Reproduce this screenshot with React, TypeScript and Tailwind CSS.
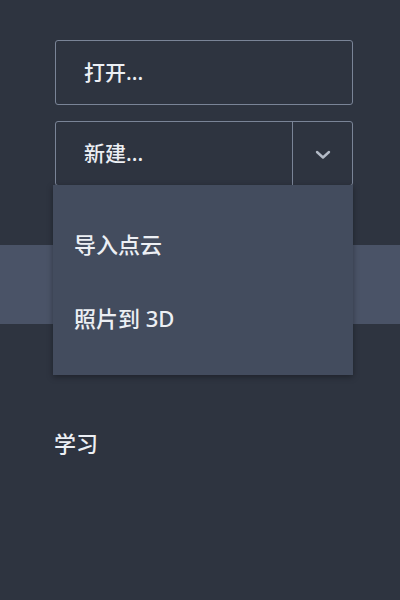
import React from 'react';

const font = { fontFamily: '"Noto Sans", "Noto Sans CJK SC", sans-serif' };

const ChevronDown = () => (
  <svg width="24" height="24" viewBox="0 0 24 24" fill="none" stroke="currentColor" strokeWidth={2.4} strokeLinecap="round" strokeLinejoin="round">
    <path d="M6 10l6 5.5 6-5.5" />
  </svg>
);

export default function App() {
  return (
    <div className="min-h-screen w-full bg-[#2e3440] text-[#eceff4]" style={font}>
      <div className="flex flex-col pt-10 px-[55px] pr-[47px] gap-4">
        <button className="h-[65px] w-full flex items-center rounded-[3px] border border-[#7a8497] px-7 text-[21px] font-medium text-left">
          打开...
        </button>
        <div className="relative">
          <div className="h-[65px] w-full flex rounded-[3px] border border-[#7a8497]">
            <button className="flex-1 flex items-center px-7 text-[21px] font-medium">新建...</button>
            <button className="w-[60px] flex items-center justify-center border-l border-[#7a8497] text-[#b3bac6]">
              <ChevronDown />
            </button>
          </div>
          <div className="absolute left-[-2px] right-0 top-[64px] z-10 h-[190px] bg-[#434c5e] shadow-[0_2px_6px_rgba(0,0,0,0.35)] flex flex-col pt-[48px] gap-[52px] px-[21px] text-[22px] font-medium">
            <div className="leading-[22px]">导入点云</div>
            <div className="leading-[22px]">照片到 3D</div>
          </div>
        </div>
      </div>
      <div className="mt-[59px] h-[79px] w-full bg-[#4a5367]" />
      <div className="px-[54px] pt-[108px] text-[22px] leading-[22px] font-medium">学习</div>
    </div>
  );
}
